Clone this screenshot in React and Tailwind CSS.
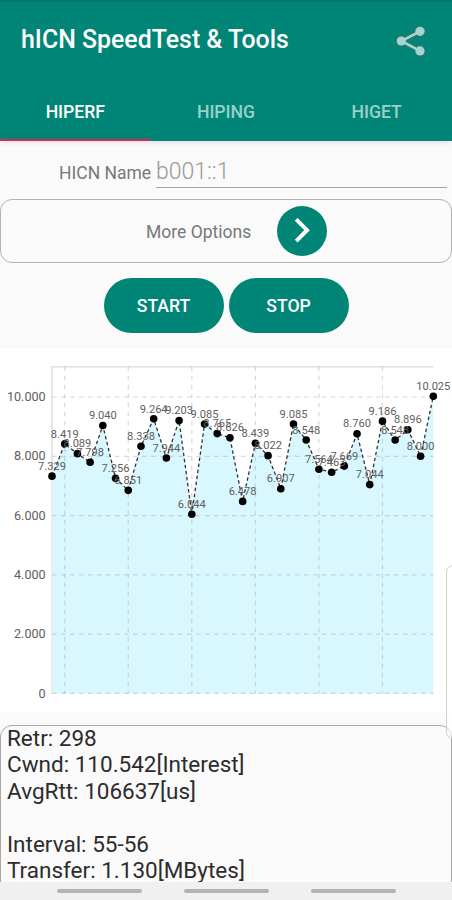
// App.jsx
// hICN SpeedTest & Tools, HIPERF tab: options, throughput chart and log output

import { useState } from "react";

const TABS = ["HIPERF", "HIPING", "HIGET"];

// throughput samples, one per interval
const SAMPLES = [
  7.329, 8.419, 8.089, 7.798, 9.04, 7.256, 6.851, 8.338, 9.264, 7.944, 9.203,
  6.044, 9.085, 8.765, 8.626, 6.478, 8.439, 8.022, 6.907, 9.085, 8.548, 7.564,
  7.463, 7.669, 8.76, 7.044, 9.186, 8.548, 8.896, 8.0, 10.025,
];

const LOG_LINES = [
  "Retr: 298",
  "Cwnd: 110.542[Interest]",
  "AvgRtt: 106637[us]",
  "",
  "Interval: 55-56",
  "Transfer: 1.130[MBytes]",
];

// plot area inside the 452x364 chart
const LEFT = 52;
const RIGHT = 433.3;
const TOP = 18.8;
const BOTTOM = 345.4;
const UNIT = 29.64;

const px = (i) => LEFT + (i * (RIGHT - LEFT)) / (SAMPLES.length - 1);
const py = (v) => BOTTOM - v * UNIT;

function ShareIcon() {
  return (
    <svg width="32" height="34" viewBox="0 0 32 34" fill="none">
      <g stroke="#3b6f67" strokeWidth="4.4">
        <path d="M25 7.3 6.3 17 25 26.9" />
      </g>
      <g fill="#3b6f67">
        <circle cx="25" cy="7.3" r="5.5" />
        <circle cx="6.3" cy="17" r="5.5" />
        <circle cx="25" cy="26.9" r="5.5" />
      </g>
      <path d="M25 7.3 6.3 17 25 26.9" stroke="#a3d6ce" strokeWidth="2.6" />
      <g fill="#a3d6ce">
        <circle cx="25" cy="7.3" r="4.6" />
        <circle cx="6.3" cy="17" r="4.6" />
        <circle cx="25" cy="26.9" r="4.6" />
      </g>
    </svg>
  );
}

function Header({ tab, onTab }) {
  return (
    <header className="relative z-10 h-[141px] shrink-0 bg-[#018577] border-t-2 border-[#017a6d] shadow-[0_1px_6px_rgba(0,0,0,0.12)] flex flex-col">
      <div className="h-[80px] pl-[21px] pr-[25px] flex items-center justify-between">
        <h1 className="text-[24.9px] leading-[26px] font-medium text-white whitespace-nowrap -mt-[4px]">
          hICN SpeedTest &amp; Tools
        </h1>
        <button aria-label="Share" className="-mt-[2px]">
          <ShareIcon />
        </button>
      </div>
      <nav className="flex-1 grid grid-cols-3">
        {TABS.map((name) => (
          <button
            key={name}
            onClick={() => onTab(name)}
            className={
              name === tab
                ? "text-[17.6px] font-medium text-white border-b-2 border-[#d8265f] pt-[4px]"
                : "text-[17.6px] font-medium text-[#9bd0c9] border-b-2 border-transparent pt-[4px]"
            }
          >
            {name}
          </button>
        ))}
      </nav>
    </header>
  );
}

function Chart() {
  const line = SAMPLES.map((v, i) => `${px(i)},${py(v)}`).join(" ");
  return (
    <svg width="452" height="364" viewBox="0 0 452 364" className="block shrink-0 bg-white">
      <path d={`M${LEFT} ${BOTTOM}V${TOP}H${RIGHT}`} fill="none" stroke="#e0e0e0" strokeWidth="1.5" />
      <polygon points={`${LEFT},${BOTTOM} ${line} ${RIGHT},${BOTTOM}`} fill="#d9f7fe" />

      {/* Grid */}
      <g stroke="#8c9c9c" strokeOpacity="0.36" strokeWidth="1.2" strokeDasharray="4.5 4.5">
        {[0, 2, 4, 6, 8, 10].map((v) => (
          <path key={v} d={`M${LEFT} ${py(v)}H${RIGHT}`} />
        ))}
        {[1, 6, 11, 16, 21, 26].map((i) => (
          <path key={i} d={`M${px(i)} ${TOP}V${BOTTOM}`} />
        ))}
      </g>

      {/* Axis labels */}
      <g fontSize="12.6" fill="#606060" textAnchor="end">
        {[0, 2, 4, 6, 8, 10].map((v) => (
          <text key={v} x="45.7" y={py(v) + 4.2}>
            {v === 0 ? "0" : v.toFixed(3)}
          </text>
        ))}
      </g>

      {/* Samples */}
      <polyline points={line} fill="none" stroke="#333" strokeWidth="1.3" strokeDasharray="3.5 2.6" />
      {SAMPLES.map((v, i) => (
        <circle key={i} cx={px(i)} cy={py(v)} r="3.8" fill="#000" />
      ))}
      <g fontSize="11.1" fill="#606060" textAnchor="middle">
        {SAMPLES.map((v, i) => (
          <text key={i} x={px(i)} y={py(v) - 6.3}>
            {v.toFixed(3)}
          </text>
        ))}
      </g>
    </svg>
  );
}

export default function App() {
  const [tab, setTab] = useState("HIPERF");

  return (
    <div className="relative w-[452px] h-[900px] overflow-hidden bg-[#fafafa] flex flex-col font-[Roboto,sans-serif]">
      <Header tab={tab} onTab={setTab} />

      {/* Name field */}
      <div className="h-[58px] shrink-0 pl-[59px] pr-[5px] flex">
        <label className="w-[97px] pt-[20px] text-[17.5px] leading-[24px] text-[#787878] whitespace-nowrap">
          HICN Name
        </label>
        <div className="flex-1 h-[47px] border-b border-[#a5a5a5] pt-[18px] text-[23px] leading-[26px] font-light text-[#999]">
          b001::1
        </div>
      </div>

      {/* More options */}
      <div className="h-[64px] shrink-0 rounded-[12px] border-[1.5px] border-[#b4b4b4] pl-[145px] flex items-center">
        <span className="w-[131px] pt-[2px] text-[17.5px] text-[#787878] whitespace-nowrap">More Options</span>
        <button className="size-[50px] rounded-full bg-[#018577] flex items-center justify-center" aria-label="Expand">
          <svg width="18" height="28" viewBox="0 0 18 28" fill="none" stroke="#fff" strokeWidth="4">
            <path d="M3.2 2.3 14 13.2 3.2 24.1" />
          </svg>
        </button>
      </div>

      {/* Start / stop */}
      <div className="h-[85px] shrink-0 pt-[15px] flex justify-center gap-[5px]">
        <button className="w-[120px] h-[55px] pt-[2px] rounded-full bg-[#018577] text-[17.6px] font-medium text-white">
          START
        </button>
        <button className="w-[120px] h-[55px] pt-[2px] rounded-full bg-[#018577] text-[17.6px] font-medium text-white">
          STOP
        </button>
      </div>

      <Chart />

      {/* Log output */}
      <div className="flex-1 min-h-0 pt-[13px] overflow-hidden">
        <div className="h-[200px] rounded-[12px] border-[1.5px] border-[#a8a8a8] pl-[6px] text-[22.5px] leading-[26.4px] text-[#2c2c2c]">
          {LOG_LINES.map((text, i) => (
            <p key={i} className="h-[26.4px] whitespace-nowrap relative -top-px">{text}</p>
          ))}
        </div>
      </div>

      {/* System navigation */}
      <div className="h-[18px] shrink-0 bg-[#f0f0f0] pt-[7px] flex justify-center gap-[42px]">
        <span className="w-[85px] h-[4px] rounded-full bg-[#b3b3b3]" />
        <span className="w-[85px] h-[4px] rounded-full bg-[#b3b3b3]" />
        <span className="w-[85px] h-[4px] rounded-full bg-[#b3b3b3]" />
      </div>

      {/* Edge panel handle, floats over the page */}
      <div className="absolute top-[565px] -right-[8px] w-[14px] h-[174px] rounded-[8px] border border-[#cfcfcf] bg-white/60" />
    </div>
  );
}
